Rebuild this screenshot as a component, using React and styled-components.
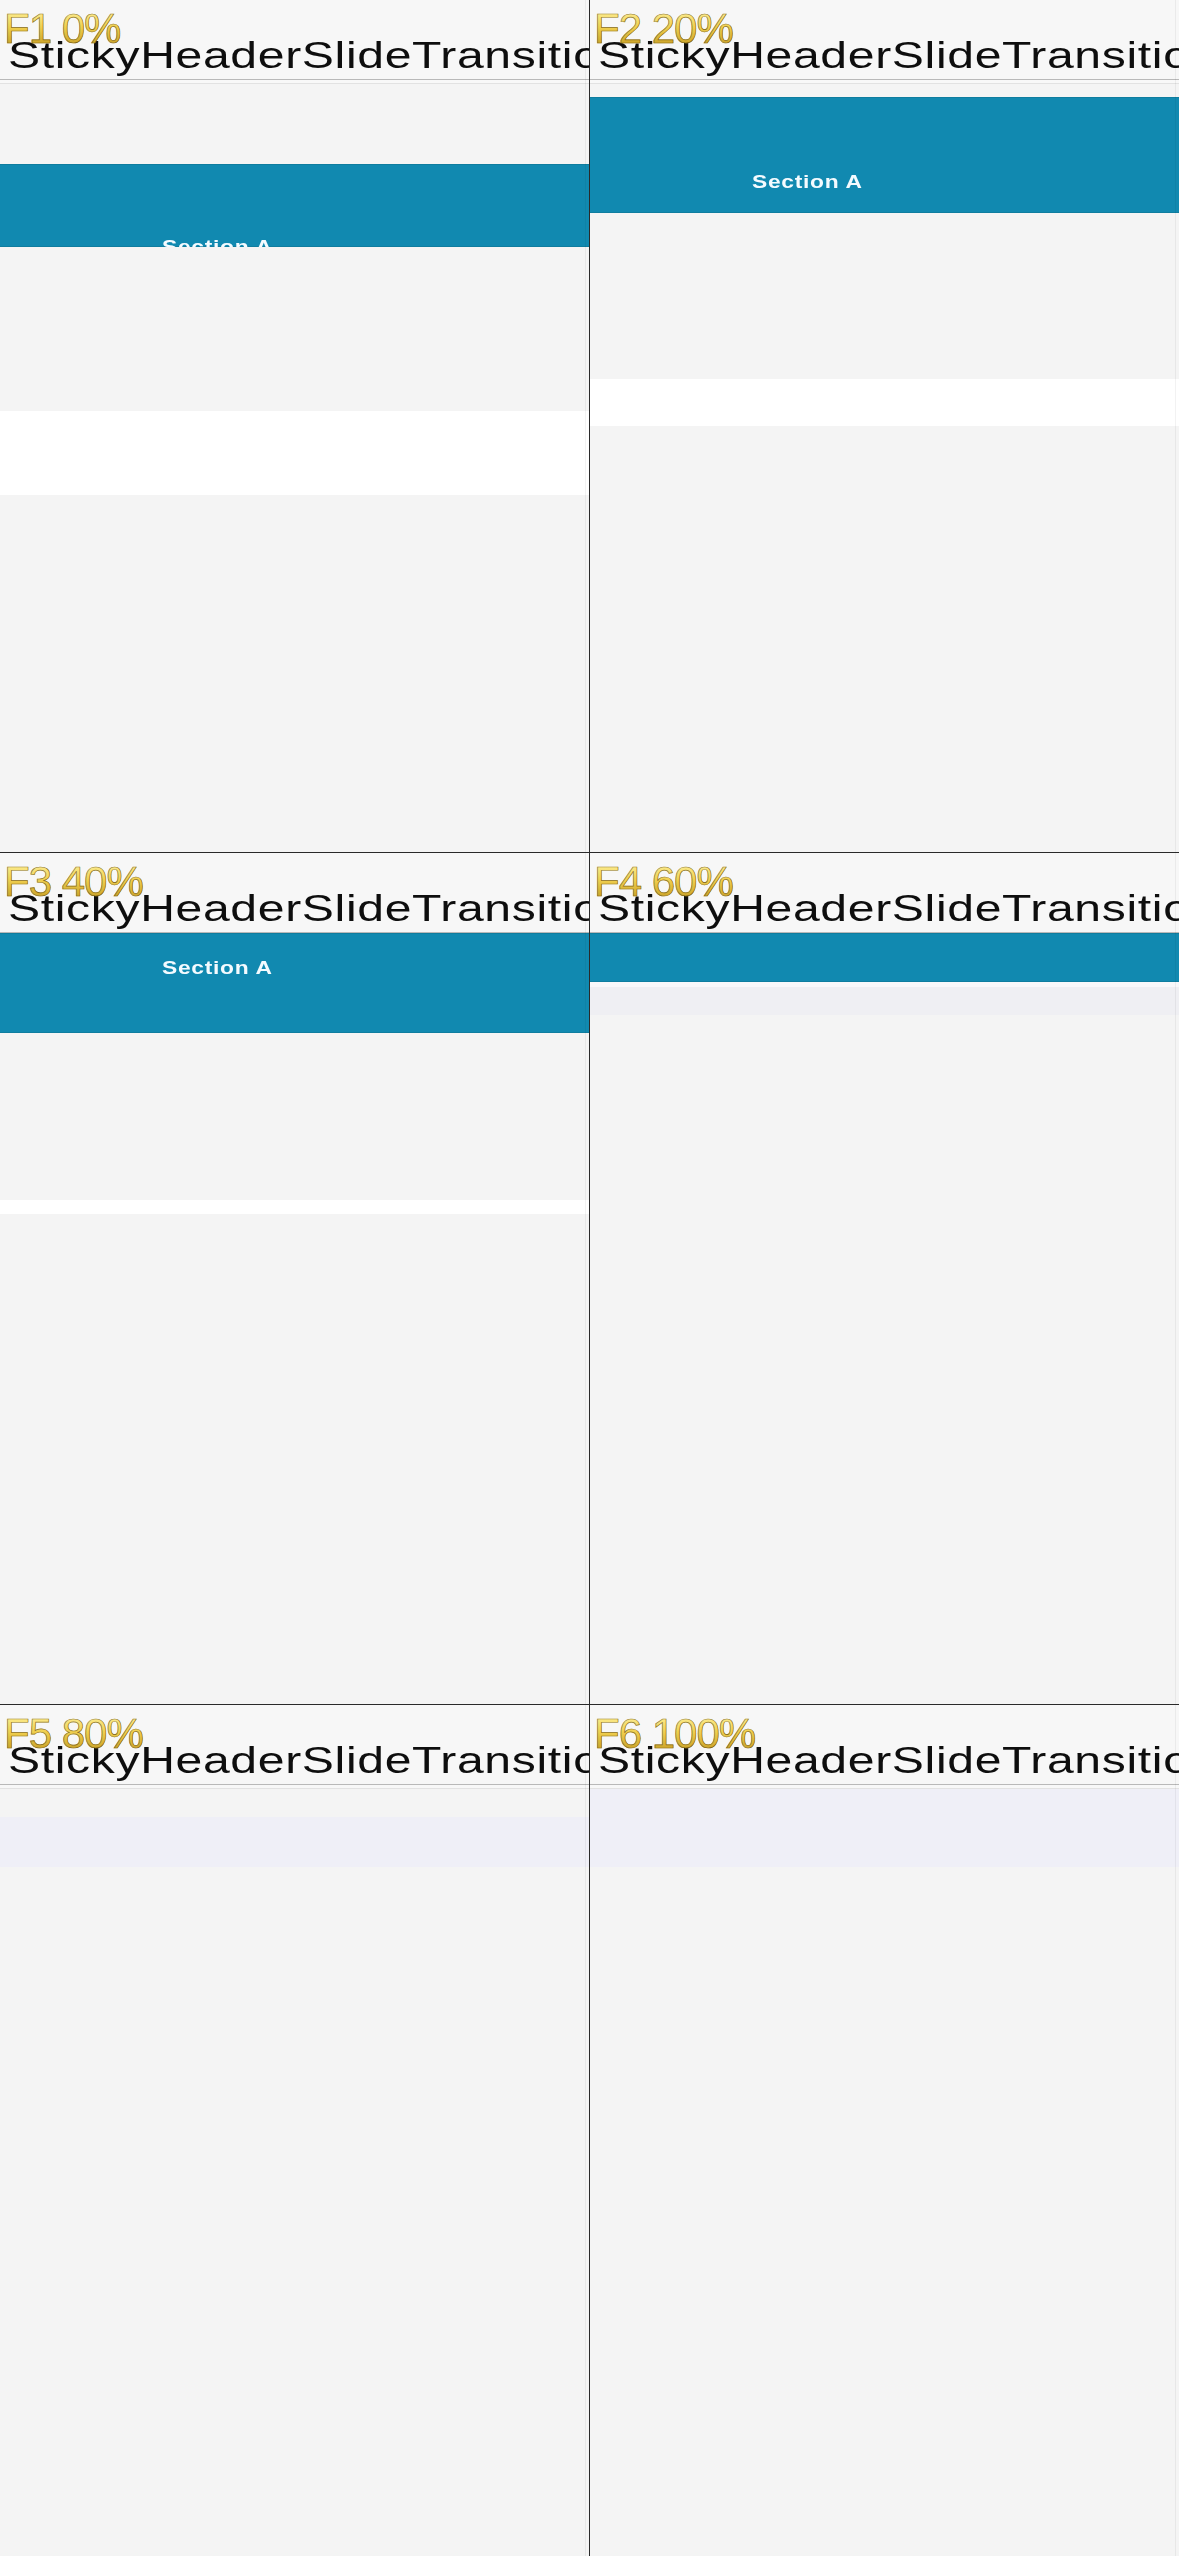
import React from 'react';
import styled, { createGlobalStyle } from 'styled-components';

const GlobalStyle = createGlobalStyle`
  html, body {
    margin: 0;
    padding: 0;
    background: #f4f4f4;
  }

  body {
    font-family: "Liberation Sans", Arial, sans-serif;
  }
`;

const tones = {
  blank: 'transparent',
  teal: '#1189b0',
  white: '#ffffff',
  mist: 'linear-gradient(to bottom, #f8f8fa 0, #f8f8fa 5px, #efeff3 5px)',
  lavender: '#efeff7',
};

// one entry per captured frame, heights in px from the top of the list area
const frames = [
  {
    tag: 'F1 0%',
    rows: [
      { tone: 'blank', height: 84 },
      { tone: 'teal', height: 83, titleTop: 75 },
      { tone: 'blank', height: 164 },
      { tone: 'white', height: 84 },
    ],
  },
  {
    tag: 'F2 20%',
    rows: [
      { tone: 'blank', height: 17 },
      { tone: 'teal', height: 116, titleTop: 77 },
      { tone: 'blank', height: 166 },
      { tone: 'white', height: 47 },
    ],
  },
  {
    tag: 'F3 40%',
    rows: [
      { tone: 'teal', height: 100, titleTop: 27 },
      { tone: 'blank', height: 167 },
      { tone: 'white', height: 14 },
    ],
  },
  {
    tag: 'F4 60%',
    rows: [
      { tone: 'teal', height: 49 },
      { tone: 'mist', height: 33 },
    ],
  },
  {
    tag: 'F5 80%',
    rows: [
      { tone: 'blank', height: 32 },
      { tone: 'lavender', height: 50 },
    ],
  },
  {
    tag: 'F6 100%',
    rows: [
      { tone: 'blank', height: 4 },
      { tone: 'lavender', height: 78 },
    ],
  },
];

const Sheet = styled.div`
  display: grid;
  grid-template-columns: 589px 589px;
  grid-template-rows: 852px 851px 851px;
  gap: 1px;
  width: 1179px;
  height: 2556px;
  background: #2a2a2a;
`;

const Frame = styled.section`
  position: relative;
  display: flex;
  flex-direction: column;
  overflow: hidden;
  background: #f4f4f4;

  &::after {
    content: '';
    position: absolute;
    top: 0;
    bottom: 0;
    right: 3px;
    width: 1px;
    background: rgba(0, 0, 0, 0.05);
  }
`;

const FrameTag = styled.span`
  position: absolute;
  top: 8px;
  left: 4px;
  z-index: 2;
  font: 42px/1 "Liberation Sans", Arial, sans-serif;
  letter-spacing: -1px;
  color: transparent;
  background: linear-gradient(180deg, #fff4a0 0%, #f0cf4f 45%, #bf951c 100%);
  -webkit-background-clip: text;
  background-clip: text;
  -webkit-text-stroke: 0.7px rgba(90, 68, 10, 0.7);
  white-space: nowrap;
`;

const Header = styled.header`
  flex: 0 0 80px;
  display: flex;
  align-items: flex-start;
  padding: 37px 0 0 8px;
  box-sizing: border-box;
  background: #f7f7f7;
  border-bottom: 1px solid #b9b9b9;
`;

const HeaderTitle = styled.h1`
  margin: 0;
  font: 400 37px/1 "Liberation Sans", Arial, sans-serif;
  letter-spacing: 0.5px;
  color: #0e0e0e;
  white-space: nowrap;
  transform: scaleX(1.3);
  transform-origin: 0 0;
`;

const List = styled.div`
  flex: 1;
  display: flex;
  flex-direction: column;
  background: linear-gradient(
    to bottom,
    #f8f8f8 0,
    #f8f8f8 3px,
    #e2e2e2 3px,
    #e2e2e2 4px,
    #f4f4f4 4px
  );
`;

const Band = styled.div`
  flex: 0 0 ${(p) => p.$height}px;
  display: flex;
  flex-direction: column;
  overflow: hidden;
  background: ${(p) => tones[p.$tone]};
  box-shadow: ${(p) =>
    p.$tone === 'teal'
      ? 'inset 0 1px 0 #0f7d9f, inset 0 -1px 0 #0f7d9f'
      : 'none'};
`;

const BandTitle = styled.span`
  margin-top: ${(p) => p.$top - 2.5}px;
  padding-left: 162px;
  font: 700 19px/1 "Liberation Sans", Arial, sans-serif;
  letter-spacing: 0.6px;
  color: #f4fbff;
  white-space: nowrap;
  transform: scaleX(1.2);
  transform-origin: 162px 0;
`;

const FrameView = ({ tag, rows }) => (
  <Frame>
    <FrameTag>{tag}</FrameTag>
    <Header>
      <HeaderTitle>StickyHeaderSlideTransition</HeaderTitle>
    </Header>
    <List>
      {rows.map((row, i) => (
        <Band key={i} $tone={row.tone} $height={row.height}>
          {row.titleTop != null && (
            <BandTitle $top={row.titleTop}>Section A</BandTitle>
          )}
        </Band>
      ))}
    </List>
  </Frame>
);

const App = () => (
  <>
    <GlobalStyle />
    <Sheet>
      {frames.map((frame) => (
        <FrameView key={frame.tag} tag={frame.tag} rows={frame.rows} />
      ))}
    </Sheet>
  </>
);

export default App;
